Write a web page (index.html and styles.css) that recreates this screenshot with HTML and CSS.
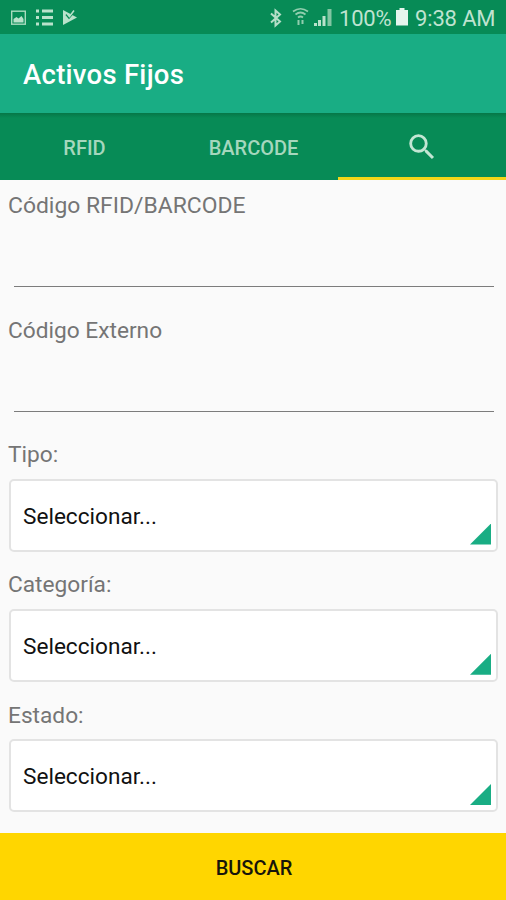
FILE: index.html
```html
<!DOCTYPE html>
<html lang="es">
<head>
<meta charset="utf-8">
<title>Activos Fijos</title>
<link rel="stylesheet" href="styles.css">
</head>
<body>
<div class="status">
  <svg class="notifications" width="80" height="34" viewBox="0 0 80 34">
    <rect x="11.7" y="11.2" width="13.6" height="13" fill="none" stroke="#a9dbbf" stroke-width="1.4"/>
    <path d="M13.500 22.500v-3.500l3-2 2 1.500 3-2.500 2 3v3.500z"/>
    <path d="M36 9.500h3v3h-3zM42 9.500h11v3H42zM36 16h3v3h-3zM42 16h11v3H42zM36 22.500h3v3h-3zM42 22.500h11v3H42z"/>
    <path d="M63 10l14 7.500L63 25z"/>
    <path d="M66 14.500l3 3.500 6-7" fill="none" stroke="#078b56" stroke-width="1.500"/>
    <path d="M67 13.500l2.500 3 4.500-6" fill="none" stroke="#b9e2cb" stroke-width="1.500"/>
  </svg>
  <svg class="signals" width="65" height="34" viewBox="270 0 65 34">
    <path d="M271 13.500l9 8-4.500 4V10.500l4.500 4-9 8" fill="none" stroke="#b5dec8" stroke-width="2"/>
    <g fill="none" stroke="#91ceae" stroke-width="1.700"><path d="M293 11.500q7.500-5.500 15 0M295.500 14.500q5-4 10 0M298 17.500q2.500-2 5 0"/><path d="M298.500 20v5M302.500 20v4" stroke-width="2"/></g>
    <path d="M314 23h3v3h-3zM318 20h3v6h-3zM322.500 16h3v10h-3z"/><path d="M327.500 9h4v17h-4z" fill="#82c6a3"/>
  </svg>
  <span class="percent">100%</span>
  <svg class="battery" width="12" height="34" viewBox="0 0 12 34"><path d="M3.500 8h5v2H12v15.500H0V10h3.500z" fill="#e5f5ed"/></svg>
  <span class="clock">9:38 AM</span>
</div>
<header class="appbar"><h1>Activos Fijos</h1></header>
<nav class="tabs">
  <div class="tab">RFID</div>
  <div class="tab">BARCODE</div>
  <div class="tab active"><svg width="34" height="34" viewBox="0 0 24 24"><path d="M15.500 14h-.79l-.28-.27A6.470 6.470 0 0 0 16 9.500 6.500 6.500 0 1 0 9.500 16c1.610 0 3.090-.59 4.230-1.570l.27.28v.79l5 4.990L20.490 19zM9.500 14a4.500 4.500 0 1 1 0-9 4.500 4.500 0 0 1 0 9z"/></svg></div>
</nav>
<main>
  <div class="field"><label class="wide">Código RFID/BARCODE</label><div class="line"></div></div>
  <div class="field"><label>Código Externo</label><div class="line"></div></div>
  <div class="choice"><label>Tipo:</label><div class="select"><span>Seleccionar...</span><i class="corner"></i></div></div>
  <div class="choice"><label>Categoría:</label><div class="select"><span>Seleccionar...</span><i class="corner"></i></div></div>
  <div class="choice"><label>Estado:</label><div class="select"><span>Seleccionar...</span><i class="corner"></i></div></div>
</main>
<button class="search">BUSCAR</button>
</body>
</html>
```
FILE: styles.css
```css
* { box-sizing: border-box; }
body { margin: 0; width: 506px; height: 900px; overflow: hidden; display: flex; flex-direction: column; background: #fafafa; font-family: Roboto, sans-serif; }
.status { height: 34px; flex: none; display: flex; background: #078b56; color: #bfe3d0; line-height: 38px; white-space: nowrap; }
.status svg { flex: none; fill: #b9e2cb; }
.signals { margin-left: 190px; }
.percent { width: 53px; margin-left: 4px; font-size: 22px; letter-spacing: -.2px; }
.battery { margin-left: 4px; }
.clock { margin-left: 7px; font-size: 22px; letter-spacing: -.15px; }
.appbar { height: 79px; flex: none; padding-left: 23px; background: #19ad84; color: #fff; }
h1 { margin: 0; font-size: 27.500px; line-height: 82px; font-weight: 500; letter-spacing: .27px; }
.tabs { height: 67px; flex: none; display: grid; grid-template-columns: 169px 169px 168px; background: linear-gradient(#067747, #078b56 5px); color: #a5d7bd; }
.tab { display: flex; align-items: center; justify-content: center; font-size: 20px; font-weight: 500; padding-top: 3px; }
.tab svg { fill: #c2e6d3; }
.active { border-bottom: 3px solid #f3d619; }
main { flex: 1; padding: 10px 8px 0 9px; }
label { display: block; height: 32px; margin-left: -1px; line-height: 32px; font-size: 22.700px; color: #757575; white-space: nowrap; }
.wide { font-size: 22.900px; }
.field { height: 124.500px; }
.line { height: 1px; margin: 64px 4px 0 5px; background: #7c7c7c; }
.choice { height: 130.300px; }
.select { position: relative; height: 73px; margin-top: 7.500px; padding-left: 12px; border: 2px solid #e3e3e3; border-radius: 5px; background: #fff; color: #111; font-size: 22.600px; line-height: 72px; }
.corner { position: absolute; right: 5px; bottom: 5px; width: 21px; height: 21px; background: #19ad84; clip-path: polygon(100% 0, 100% 100%, 0 100%); }
.search { height: 67px; flex: none; padding: 2px 0 0 2px; border: 0; background: #ffd600; color: #17150a; font: 500 20px Roboto, sans-serif; }
```
